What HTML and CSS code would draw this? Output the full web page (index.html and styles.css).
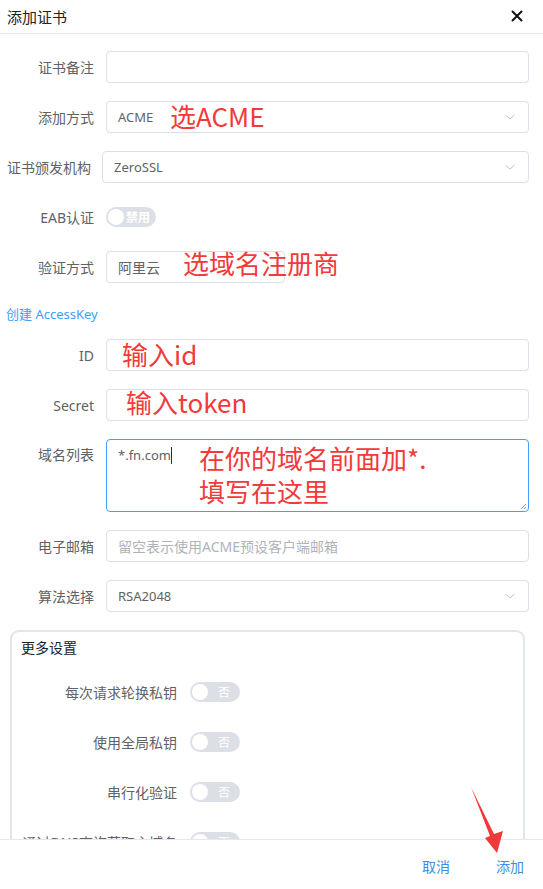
FILE: index.html
```html
<!DOCTYPE html>
<html lang="zh-CN">
<head>
  <meta charset="UTF-8">
  <title>添加证书</title>
  <link rel="stylesheet" href="styles.css">
</head>
<body>
  <div class="dialog">
    <!-- header -->
    <header class="dialog-header">
      <span class="dialog-title">添加证书</span>
      <span class="close">
        <svg width="12" height="12" viewBox="0 0 12 12"><path d="M1.5 1.5 L10.5 10.5 M10.5 1.5 L1.5 10.5" stroke="#111" stroke-width="2" stroke-linecap="round"/></svg>
      </span>
    </header>

    <!-- body -->
    <div class="dialog-body">
      <div class="form-row">
        <label class="label">证书备注</label>
        <div class="input"></div>
      </div>
      <div class="form-row">
        <label class="label">添加方式</label>
        <div class="input select">
          <span>ACME</span>
          <svg class="chevron" width="12" height="12" viewBox="0 0 12 12"><path d="M1.5 4 L6 8 L10.5 4" fill="none" stroke="#c0c4cc" stroke-width="1"/></svg>
        </div>
      </div>
      <div class="form-row">
        <label class="label label-auto">证书颁发机构</label>
        <div class="input select">
          <span>ZeroSSL</span>
          <svg class="chevron" width="12" height="12" viewBox="0 0 12 12"><path d="M1.5 4 L6 8 L10.5 4" fill="none" stroke="#c0c4cc" stroke-width="1"/></svg>
        </div>
      </div>
      <div class="form-row">
        <label class="label">EAB认证</label>
        <div class="switch">
          <span class="knob"></span>
          <span class="switch-text bold">禁用</span>
        </div>
      </div>
      <div class="form-row">
        <label class="label">验证方式</label>
        <div class="input short"><span>阿里云</span></div>
      </div>
      <div class="link-row"><a class="link">创建 AccessKey</a></div>
      <div class="form-row">
        <label class="label">ID</label>
        <div class="input"></div>
      </div>
      <div class="form-row">
        <label class="label">Secret</label>
        <div class="input"></div>
      </div>
      <div class="form-row top">
        <label class="label">域名列表</label>
        <div class="input textarea">
          <span>*.fn.com</span><span class="caret"></span>
          <svg class="grip" width="8" height="8" viewBox="0 0 8 8"><path d="M7 2 L2 7 M7 5 L5 7" stroke="#999" stroke-width="1"/></svg>
        </div>
      </div>
      <div class="form-row">
        <label class="label">电子邮箱</label>
        <div class="input"><span class="placeholder">留空表示使用ACME预设客户端邮箱</span></div>
      </div>
      <div class="form-row">
        <label class="label">算法选择</label>
        <div class="input select">
          <span>RSA2048</span>
          <svg class="chevron" width="12" height="12" viewBox="0 0 12 12"><path d="M1.5 4 L6 8 L10.5 4" fill="none" stroke="#c0c4cc" stroke-width="1"/></svg>
        </div>
      </div>

      <!-- more settings -->
      <div class="more">
        <div class="more-title">更多设置</div>
        <div class="switch-row">
          <label class="label wide">每次请求轮换私钥</label>
          <div class="switch"><span class="knob"></span><span class="switch-text">否</span></div>
        </div>
        <div class="switch-row">
          <label class="label wide">使用全局私钥</label>
          <div class="switch"><span class="knob"></span><span class="switch-text">否</span></div>
        </div>
        <div class="switch-row">
          <label class="label wide">串行化验证</label>
          <div class="switch"><span class="knob"></span><span class="switch-text">否</span></div>
        </div>
        <div class="switch-row">
          <label class="label wide">通过DNS查询获取主域名</label>
          <div class="switch"><span class="knob"></span><span class="switch-text">否</span></div>
        </div>
      </div>
    </div>

    <!-- footer -->
    <footer class="dialog-footer">
      <a class="btn">取消</a>
      <a class="btn">添加</a>
    </footer>

    <!-- red hand-written notes over the screenshot -->
    <div class="note note-acme">选ACME</div>
    <div class="note note-dns">选域名注册商</div>
    <div class="note note-id">输入id</div>
    <div class="note note-token">输入token</div>
    <div class="note note-domain">在你的域名前面加*.<br>填写在这里</div>
    <svg class="arrow" width="543" height="889" viewBox="0 0 543 889">
      <polygon points="471,787 494,834 503,831 497,853 485,838 490,836" fill="#f03a3a"/>
    </svg>
  </div>
</body>
</html>
```

FILE: styles.css
```css
* {
  margin: 0;
  padding: 0;
  box-sizing: border-box;
}
body {
  background: #fff;
  font-family: "Noto Sans", "Noto Sans CJK SC", sans-serif;
  font-size: 14px;
  color: #606266;
}

.dialog {
  position: relative;
  display: flex;
  flex-direction: column;
  height: 100vh;
  overflow: hidden;
}

/* header */
.dialog-header {
  flex: 0 0 34px;
  display: flex;
  align-items: center;
  justify-content: space-between;
  padding: 0 20px 0 7px;
  border-bottom: 1px solid #e4e7ed;
}
.dialog-title {
  font-size: 15px;
  color: #222;
}
.close {
  display: flex;
  margin-top: -2px;
}

/* body */
.dialog-body {
  flex: 1;
  overflow: hidden;
  padding: 17px 14px 0 8px;
}
.form-row {
  display: flex;
  align-items: center;
  min-height: 32px;
  margin-bottom: 18px;
}
.form-row.top {
  align-items: flex-start;
}
.form-row.top .label {
  line-height: 32px;
}
.label {
  flex-shrink: 0;
  min-width: 86px;
  margin-right: 12px;
  text-align: right;
  white-space: nowrap;
  color: #606266;
}
.label.label-auto {
  min-width: 0;
  margin-left: -1px;
  margin-right: 11px;
}
.input {
  flex: 1;
  display: flex;
  align-items: center;
  height: 32px;
  padding: 0 11px;
  border: 1px solid #dcdfe6;
  border-radius: 4px;
  color: #606266;
  font-size: 13px;
}
.input.short {
  flex: 0 0 179px;
  font-size: 14px;
}
.select {
  justify-content: space-between;
  padding-right: 12px;
}
.placeholder {
  color: #b0b3b8;
  font-size: 14px;
}
.textarea {
  position: relative;
  align-items: flex-start;
  height: 73px;
  padding-top: 6px;
  border-color: #409eff;
}
.caret {
  display: inline-block;
  width: 1px;
  height: 17px;
  margin-top: 1px;
  background: #303133;
}
.grip {
  position: absolute;
  right: 1px;
  bottom: 1px;
}

/* switch */
.switch {
  position: relative;
  display: flex;
  align-items: center;
  width: 50px;
  height: 20px;
  border-radius: 10px;
  background: #dcdfe6;
}
.knob {
  width: 16px;
  height: 16px;
  margin-left: 2px;
  border-radius: 50%;
  background: #fff;
}
.switch-text {
  flex: 1;
  text-align: center;
  font-size: 12px;
  color: #fff;
}
.switch-text.bold {
  font-weight: 700;
  text-align: left;
  padding-left: 2px;
}

/* link */
.link-row {
  height: 24px;
  margin: 0 0 14px -2px;
  display: flex;
  align-items: center;
}
.link {
  color: #409eff;
  font-size: 13px;
}

/* more settings */
.more {
  margin: 0 4px 0 2px;
  padding-bottom: 20px;
  border: 2px solid #e2e5eb;
  border-radius: 9px;
}
.more-title {
  padding: 6px 0 0 9px;
  line-height: 20px;
  color: #222;
}
.switch-row {
  display: flex;
  align-items: center;
  height: 32px;
  margin-top: 18px;
}
.switch-row:first-of-type {
  margin-top: 19px;
}
.label.wide {
  min-width: 165px;
  margin-right: 13px;
}

/* footer */
.dialog-footer {
  flex: 0 0 50px;
  display: flex;
  align-items: center;
  justify-content: flex-end;
  gap: 46px;
  padding: 2px 19px 0 0;
  border-top: 1px solid #e4e7ed;
}
.btn {
  color: #3a8ee6;
  font-size: 14px;
}

/* red notes */
.note {
  position: absolute;
  font-family: "Noto Sans CJK SC", sans-serif;
  font-size: 26px;
  line-height: 33px;
  color: #f23a3a;
  white-space: nowrap;
}
.note-acme { left: 170px; top: 99px; }
.note-dns { left: 183px; top: 246px; }
.note-id { left: 122px; top: 337px; }
.note-token { left: 126px; top: 385px; }
.note-domain { left: 199px; top: 441px; }
.arrow {
  position: absolute;
  left: 0;
  top: 0;
  pointer-events: none;
}
```
